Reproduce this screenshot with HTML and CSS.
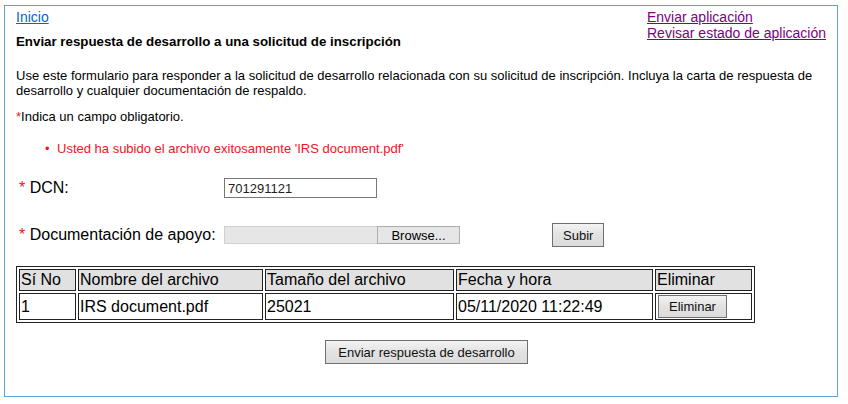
FILE: index.html
```html
<!DOCTYPE html>
<html lang="es">
<head>
    <meta charset="UTF-8">
    <meta name="viewport" content="width=device-width, initial-scale=1.0">
    <title>Enviar respuesta de desarrollo</title>
    <link rel="stylesheet" href="styles.css">
</head>
<body>
    <div class="page">
        <div class="header">
            <div class="header-left">
                <a class="home-link" href="#">Inicio</a>
                <h1>Enviar respuesta de desarrollo a una solicitud de inscripción</h1>
            </div>
            <div class="header-links">
                <a href="#">Enviar aplicación</a>
                <a href="#">Revisar estado de aplicación</a>
            </div>
        </div>

        <p class="intro">Use este formulario para responder a la solicitud de desarrollo relacionada con su solicitud de inscripción. Incluya la carta de respuesta de desarrollo y cualquier documentación de respaldo.</p>

        <p class="required-note"><span class="req">*</span>Indica un campo obligatorio.</p>

        <ul class="messages">
            <li>Usted ha subido el archivo exitosamente 'IRS document.pdf'</li>
        </ul>

        <div class="field-row dcn-row">
            <label class="field-label" for="dcn"><span class="req">*</span> DCN:</label>
            <input class="text-input" id="dcn" type="text" value="701291121">
        </div>

        <div class="field-row upload-row">
            <label class="field-label"><span class="req">*</span> Documentación de apoyo:</label>
            <div class="file-input">
                <span class="file-name"></span>
                <button class="file-browse" type="button">Browse...</button>
            </div>
            <button class="btn upload-btn" type="button">Subir</button>
        </div>

        <table class="files">
            <colgroup>
                <col class="col-no">
                <col class="col-name">
                <col class="col-size">
                <col class="col-date">
                <col class="col-del">
            </colgroup>
            <tr>
                <th>Sí No</th>
                <th>Nombre del archivo</th>
                <th>Tamaño del archivo</th>
                <th>Fecha y hora</th>
                <th>Eliminar</th>
            </tr>
            <tr>
                <td>1</td>
                <td>IRS document.pdf</td>
                <td>25021</td>
                <td>05/11/2020 11:22:49</td>
                <td><button class="btn delete-btn" type="button">Eliminar</button></td>
            </tr>
        </table>

        <div class="actions">
            <button class="btn submit-btn" type="button">Enviar respuesta de desarrollo</button>
        </div>
    </div>
</body>
</html>
```

FILE: styles.css
```css
* {
    margin: 0;
    padding: 0;
    box-sizing: border-box;
}

body {
    font-family: "Liberation Sans", Arial, sans-serif;
    color: #000;
    background-color: white;
}

.page {
    width: 834px;
    height: 392px;
    margin: 5px 0 0 4px;
    padding: 3px 11px 0 11px;
    border: 1px solid #5ba4d8;
}

.header {
    display: flex;
    justify-content: space-between;
}

.home-link {
    display: block;
    font-size: 14px;
    line-height: 16px;
    color: #0b63c8;
}

h1 {
    margin-top: 9px;
    font-size: 13.3px;
    line-height: 15px;
    font-weight: bold;
}

.header-links {
    display: flex;
    flex-direction: column;
    align-items: flex-start;
}

.header-links a {
    font-size: 14px;
    line-height: 16px;
    color: #800080;
}

.intro {
    margin-top: 19px;
    font-size: 13px;
    line-height: 15px;
}

.required-note {
    margin-top: 11px;
    font-size: 13px;
    line-height: 15px;
}

.req {
    color: #f0141e;
}

.messages {
    margin-top: 17px;
    padding-left: 29px;
    list-style: none;
    font-size: 13px;
    line-height: 15px;
    color: #f0141e;
}

.messages li::before {
    content: "•";
    display: inline-block;
    width: 12px;
}

.field-row {
    display: flex;
    align-items: center;
    padding-left: 3px;
    font-size: 16px;
}

.field-label {
    width: 205px;
    line-height: 18px;
}

.dcn-row {
    margin-top: 22px;
    height: 20px;
}

.text-input {
    width: 153px;
    height: 20px;
    padding: 0 3px;
    border: 1px solid #767676;
    font-family: "Liberation Sans", Arial, sans-serif;
    font-size: 13px;
    color: #222;
}

.upload-row {
    margin-top: 25px;
    height: 24px;
}

.file-input {
    display: flex;
    height: 18px;
}

.file-name {
    width: 153px;
    background-color: #e6e6e6;
    border: 1px solid #cfcfcf;
    border-right: none;
}

.file-browse {
    width: 83px;
    background-color: #e6e6e6;
    border: 1px solid #adadad;
    font-family: "Liberation Sans", Arial, sans-serif;
    font-size: 13px;
    color: #000;
}

.btn {
    padding: 0 10px;
    border: 1px solid #707070;
    background: linear-gradient(#f3f3f3, #e2e2e2 50%, #dcdcdc);
    font-family: "Liberation Sans", Arial, sans-serif;
    font-size: 13px;
    color: #111;
}

.upload-btn {
    margin-left: 92px;
    height: 24px;
}

.files {
    margin-top: 19px;
    width: 739px;
    table-layout: fixed;
    border: 1px solid #222;
    border-spacing: 2px;
    font-size: 16px;
}

.col-no { width: 57px; }
.col-name { width: 185px; }
.col-size { width: 189px; }
.col-date { width: 197px; }
.col-del { width: 97px; }

.files th, .files td {
    padding: 1px;
    border: 1px solid #222;
    line-height: 18px;
    text-align: left;
    font-weight: normal;
    white-space: nowrap;
}

.files th {
    background-color: #e1e1e1;
}

.files td {
    height: 24px;
}

.delete-btn {
    height: 23px;
    margin-left: 1px;
    vertical-align: middle;
}

.actions {
    margin-top: 17px;
    padding-left: 309px;
}

.submit-btn {
    width: 203px;
    height: 24px;
}
```
